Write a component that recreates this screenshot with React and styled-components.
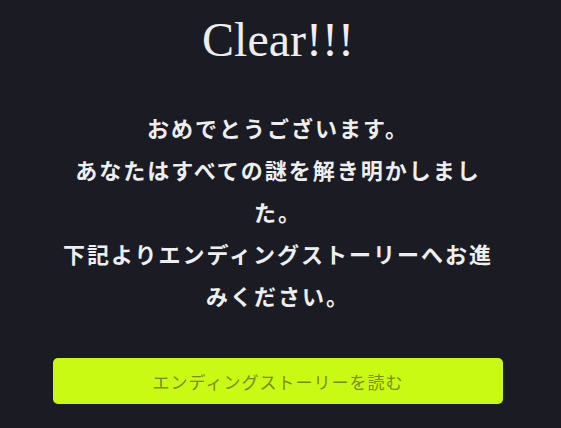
import React from 'react'
import styled, { createGlobalStyle } from 'styled-components'

const GlobalStyle = createGlobalStyle`
  html, body {
    margin: 0;
    padding: 0;
    background: #1b1c23;
  }
  body {
    font-family: "Noto Sans CJK JP", "Noto Sans", sans-serif;
  }
`

const Page = styled.main`
  min-height: 428px;
  display: flex;
  flex-direction: column;
  align-items: center;
  padding-top: 12px;
  box-sizing: border-box;
  margin-left: -5px;
`

const Title = styled.h1`
  margin: 0;
  font-family: "Liberation Serif", "Times New Roman", serif;
  font-weight: normal;
  font-size: 48px;
  line-height: 56px;
  color: #eeeeee;
`

const Message = styled.p`
  width: 450px;
  margin: 38px 0 0;
  text-align: center;
  font-size: 22px;
  font-weight: bold;
  letter-spacing: 2px;
  line-height: 42px;
  color: #eeeeee;
`

const ReadButton = styled.button`
  width: 450px;
  height: 46px;
  margin-top: 42px;
  border: none;
  border-radius: 5px;
  background: #c8fa14;
  color: #7a8a1e;
  font-family: inherit;
  font-size: 17px;
  letter-spacing: 1px;
  cursor: pointer;
`

const App = () => {
  return (
    <>
      <GlobalStyle />
      <Page>
        <Title>Clear!!!</Title>
        <Message>
          おめでとうございます。
          <br />
          あなたはすべての謎を解き明かしました。
          <br />
          下記よりエンディングストーリーへお進みください。
        </Message>
        <ReadButton>エンディングストーリーを読む</ReadButton>
      </Page>
    </>
  )
}

export default App
